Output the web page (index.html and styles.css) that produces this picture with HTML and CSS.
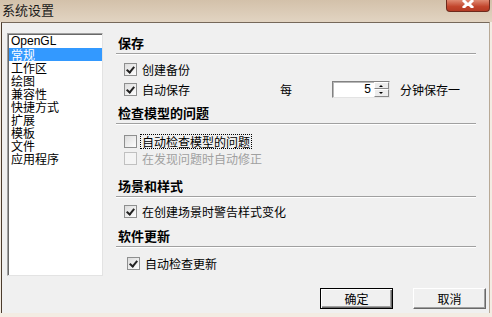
FILE: index.html
```html
<!DOCTYPE html>
<html>
<head>
<meta charset="utf-8">
<link rel="stylesheet" href="styles.css">
</head>
<body>
<div class="window">
  <div class="titlebar">
    <span class="title">系统设置</span>
    <span class="close"><svg width="14" height="8" viewBox="0 0 14 8"><path d="M2 0 L6 4 L2 8 M12 0 L8 4 L12 8" stroke="#fff" stroke-width="3" fill="none"/></svg></span>
  </div>
  <div class="client">
    <div class="main">
      <div class="listbox">
        <div class="item latin">OpenGL</div>
        <div class="item selected">常规</div>
        <div class="item">工作区</div>
        <div class="item">绘图</div>
        <div class="item">兼容性</div>
        <div class="item">快捷方式</div>
        <div class="item">扩展</div>
        <div class="item">模板</div>
        <div class="item">文件</div>
        <div class="item">应用程序</div>
      </div>
      <div class="panel">
        <div class="section s1">保存</div>
        <div class="opt o1"><span class="cb checked"></span><span>创建备份</span></div>
        <div class="opt o2"><span class="cb checked"></span><span class="lbl-fixed">自动保存</span><span class="every">每</span>
          <span class="spin"><span class="spin-val">5</span><span class="spin-btns"><span class="up"></span><span class="down"></span></span></span>
          <span>分钟保存一</span></div>
        <div class="section s2">检查模型的问题</div>
        <div class="opt o3 short"><span class="cb"></span><span class="focus">自动检查模型的问题</span></div>
        <div class="opt short disabled"><span class="cb dis"></span><span>在发现问题时自动修正</span></div>
        <div class="section s3">场景和样式</div>
        <div class="opt o5 short"><span class="cb checked"></span><span>在创建场景时警告样式变化</span></div>
        <div class="section s4">软件更新</div>
        <div class="opt o6 short"><span class="cb checked"></span><span>自动检查更新</span></div>
      </div>
    </div>
    <div class="buttons">
      <button class="btn default">确定</button>
      <button class="btn">取消</button>
    </div>
  </div>
</div>
</body>
</html>
```
FILE: styles.css
```css
html, body {
  margin: 0;
  padding: 0;
}
body {
  width: 492px;
  height: 317px;
  overflow: hidden;
  font-family: "Noto Sans CJK SC", "Liberation Sans", sans-serif;
  font-size: 12px;
  color: #000;
}
.window {
  width: 492px;
  height: 317px;
  display: flex;
  flex-direction: column;
  background: #f3ece3;
}
.titlebar {
  height: 22px;
  flex: none;
  display: flex;
  justify-content: space-between;
  align-items: flex-start;
  background: linear-gradient(to bottom, #d3c1aa, #e2d4c2);
  padding-left: 2px;
}
.title {
  font-size: 13px;
  line-height: 20px;
  color: #1a1a1a;
}
.close {
  width: 44px;
  height: 12px;
  margin-right: 2px;
  box-sizing: border-box;
  border: 1px solid #6e2a1c;
  border-top: none;
  border-radius: 0 0 4px 4px;
  background: linear-gradient(to bottom, #e08a72, #c2452c 60%, #b43a24);
  display: flex;
  justify-content: center;
  align-items: flex-start;
}
.client {
  flex: 1;
  margin: 0 2px 4px 1px;
  border-left: 1px solid #4c3c2d;
  border-top: 1px solid #76685a;
  border-right: 1px solid #b8a996;
  background: #f0f0f0;
  display: flex;
  flex-direction: column;
  padding: 10px 0 0 5px;
}
.main {
  display: flex;
}
.listbox {
  width: 96px;
  height: 243px;
  box-sizing: border-box;
  background: #fff;
  border: 1px solid;
  border-color: #a0a0a0 #e3e3e3 #e3e3e3 #a0a0a0;
  box-shadow: inset 1px 1px 0 #696969;
  padding: 1px 0 0 1px;
}
.item {
  height: 13px;
  line-height: 13px;
  padding-left: 2px;
  font-size: 12px;
}
.item.latin {
  font-family: "Liberation Sans", sans-serif;
}
.item.selected {
  background: #3399ff;
  color: #fff;
}
.panel {
  margin-left: 13px;
  width: 360px;
}
.section {
  height: 20px;
  line-height: 20px;
  font-size: 13px;
  font-weight: bold;
  padding-left: 2px;
  border-bottom: 1px solid #a0a0a0;
  box-shadow: 0 1px 0 #fff;
}
.s2 { margin-top: 4px; }
.s3 { margin-top: 9px; }
.s4 { margin-top: 6px; }
.opt {
  display: flex;
  align-items: center;
  height: 20px;
  padding-left: 8px;
}
.opt.short { height: 17px; }
.o1 { margin-top: 5px; }
.o3 { margin-top: 9px; }
.o5 { margin-top: 6px; }
.o6 { margin-top: 8px; padding-left: 11px; }
.cb {
  width: 13px;
  height: 13px;
  box-sizing: border-box;
  border: 1px solid #8e8f8f;
  background: linear-gradient(135deg, #dcdcdc, #fdfdfd);
  margin-right: 5px;
  flex: none;
  position: relative;
}
.cb.checked::after {
  content: "";
  position: absolute;
  left: 2px;
  top: 1px;
  width: 3px;
  height: 6px;
  border: solid #222;
  border-width: 0 2px 2px 0;
  transform: rotate(40deg);
  transform-origin: center;
  left: 3px;
}
.cb.dis {
  border-color: #c0c0c0;
  background: #f4f4f4;
}
.disabled { color: #a0a0a0; }
.focus {
  outline: 1px dotted #000;
  outline-offset: 0;
  line-height: 13px;
  padding: 0 1px;
  margin-left: -1px;
}
.lbl-fixed { width: 138px; }
.every { width: 52px; }
.spin {
  width: 58px;
  height: 17px;
  box-sizing: border-box;
  border: 1px solid;
  border-color: #828282 #e3e3e3 #e3e3e3 #828282;
  box-shadow: inset 1px 1px 0 #b8b8b8;
  background: #fff;
  display: flex;
  margin-right: 10px;
}
.spin-val {
  flex: 1;
  text-align: right;
  padding-right: 3px;
  line-height: 15px;
  font-family: "Liberation Sans", sans-serif;
  font-size: 12px;
}
.spin-btns {
  width: 15px;
  display: flex;
  flex-direction: column;
}
.spin-btns span {
  flex: 1;
  background: #ececec;
  border: 1px solid;
  border-color: #fff #888 #888 #fff;
  position: relative;
}
.spin-btns .up::after, .spin-btns .down::after {
  content: "";
  position: absolute;
  left: 4px;
  width: 0;
  height: 0;
  border-left: 2px solid transparent;
  border-right: 2px solid transparent;
}
.spin-btns .up::after { top: 2px; border-bottom: 2px solid #000; }
.spin-btns .down::after { top: 2px; border-top: 2px solid #000; }
.buttons {
  display: flex;
  justify-content: flex-end;
  gap: 20px;
  margin-top: 12px;
  padding-right: 3px;
}
.btn {
  width: 73px;
  height: 21px;
  box-sizing: border-box;
  margin: 0;
  padding: 0;
  font-family: "Noto Sans CJK SC", sans-serif;
  font-size: 12px;
  color: #000;
  background: #f0f0f0;
  border: 1px solid;
  border-color: #fff #696969 #696969 #fff;
  box-shadow: inset -1px -1px 0 #a0a0a0;
}
.btn.default {
  border: 1px solid #000;
  box-shadow: inset 1px 1px 0 #fff, inset -1px -1px 0 #696969, inset -2px -2px 0 #a0a0a0;
}
```
